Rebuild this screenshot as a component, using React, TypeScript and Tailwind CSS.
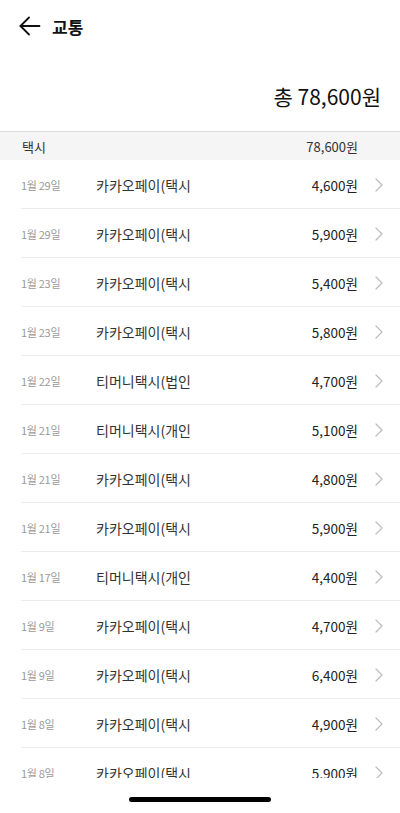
import React from "react";

const rows: [string, string, string][] = [
  ["1월 29일", "카카오페이(택시", "4,600원"],
  ["1월 29일", "카카오페이(택시", "5,900원"],
  ["1월 23일", "카카오페이(택시", "5,400원"],
  ["1월 23일", "카카오페이(택시", "5,800원"],
  ["1월 22일", "티머니택시(법인", "4,700원"],
  ["1월 21일", "티머니택시(개인", "5,100원"],
  ["1월 21일", "카카오페이(택시", "4,800원"],
  ["1월 21일", "카카오페이(택시", "5,900원"],
  ["1월 17일", "티머니택시(개인", "4,400원"],
  ["1월 9일", "카카오페이(택시", "4,700원"],
  ["1월 9일", "카카오페이(택시", "6,400원"],
  ["1월 8일", "카카오페이(택시", "4,900원"],
  ["1월 8일", "카카오페이(택시", "5,900원"],
];

export default function App() {
  return (
    <div
      className="w-[400px] h-[813px] bg-white flex flex-col overflow-hidden"
      style={{ fontFamily: '"Noto Sans CJK KR", "Noto Sans", sans-serif' }}
    >
      <div className="h-[52px] flex items-center pl-[19px] shrink-0">
        <svg width="22" height="20" viewBox="0 0 22 20" fill="none" stroke="#111" strokeWidth="1.8" strokeLinecap="round" strokeLinejoin="round">
          <path d="M10 1.5 L1.5 10 L10 18.5" />
          <path d="M1.5 10 H20.5" />
        </svg>
        <span className="ml-[11px] text-[17px] font-bold text-[#111] leading-none">교통</span>
      </div>
      <div className="h-[79px] flex items-center justify-end pr-[19px] shrink-0">
        <span className="text-[21px] text-[#111] leading-none mt-[10px]">총 78,600원</span>
      </div>
      <div className="flex-1 min-h-0 overflow-hidden h-[647px] max-h-[647px]">
        <div className="h-[29px] bg-[#f5f5f5] border-t border-[#dedede] flex items-center justify-between pl-[22px] pr-[42px]">
          <span className="text-[13px] text-[#333] mt-[1px]">택시</span>
          <span className="text-[13px] text-[#333] mt-[1px]">78,600원</span>
        </div>
        {rows.map(([d, m, a], i) => (
          <div key={i} className="h-[49px] ml-[21px] border-b border-[#ececec] flex items-center pt-[2px]">
            <span className="w-[75px] text-[11px] text-[#9a9a9a] tracking-[-0.3px]">{d}</span>
            <span className="flex-1 text-[14px] text-[#333]">{m}</span>
            <span className="text-[13.5px] text-[#222]">{a}</span>
            <svg className="ml-[17px] mr-[17px]" width="8" height="14" viewBox="0 0 8 14" fill="none" stroke="#bdbdbd" strokeWidth="1.2" strokeLinecap="round" strokeLinejoin="round">
              <path d="M1 1 L7 7 L1 13" />
            </svg>
          </div>
        ))}
      </div>
      <div className="h-[35px] shrink-0 flex justify-center pt-[19px]">
        <div className="w-[142px] h-[5px] rounded-full bg-black" />
      </div>
    </div>
  );
}
